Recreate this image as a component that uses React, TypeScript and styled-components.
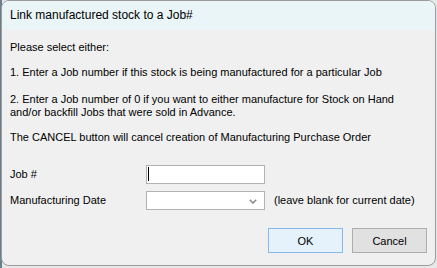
import React from "react";
import styled, { createGlobalStyle } from "styled-components";

const Global = createGlobalStyle`
  html, body { margin: 0; padding: 0; }
  body {
    background: linear-gradient(90deg, #6a7f8c 0px, #6a7f8c 2px, #e8e8e8 2px);
    width: 437px;
    height: 268px;
    overflow: hidden;
    font-family: Tahoma, "Liberation Sans", "DejaVu Sans", sans-serif;
  }
`;

const Window = styled.div`
  margin: 0 0 0 1px;
  width: 435px;
  height: 266px;
  box-sizing: border-box;
  border: 1px solid #9c9c9c;
  border-radius: 8px;
  overflow: hidden;
  background: #f0f0f0;
  display: flex;
  flex-direction: column;
`;

const TitleBar = styled.div`
  height: 29px;
  flex: none;
  background: #eaf5f7;
  display: flex;
  align-items: center;
  padding-left: 8px;
  padding-bottom: 1px;
  box-sizing: border-box;
  font-family: "Segoe UI", "Liberation Sans", sans-serif;
  font-size: 12px;
  color: #000;
`;

const Body = styled.div`
  flex: 1;
  padding: 11px 8px 0 8px;
  font-size: 11px;
  line-height: 13px;
  color: #000;
  display: flex;
  flex-direction: column;
`;

const Para = styled.p<{ $gap: number }>`
  margin: ${(p) => p.$gap}px 0 0 0;
  white-space: nowrap;
`;

const Form = styled.div`
  margin-top: 21px;
  display: grid;
  grid-template-columns: 127px 119px auto;
  column-gap: 9px;
  row-gap: 7px;
  align-items: center;
`;

const Label = styled.label`
  display: block;
  padding-bottom: 1px;
`;

const Field = styled.div`
  height: 19px;
  box-sizing: border-box;
  border: 1px solid #b2b2b2;
  background: #fff;
  position: relative;
  display: flex;
  align-items: center;
  justify-content: flex-end;
`;

const Caret = styled.span`
  position: absolute;
  left: 1px;
  top: 1px;
  width: 1px;
  height: 14px;
  background: #000;
`;

const Chevron = styled.svg`
  margin-right: 7px;
  margin-top: 1px;
`;

const Hint = styled.span`
  white-space: nowrap;
`;

const Buttons = styled.div`
  margin-top: 18px;
  display: flex;
  justify-content: flex-end;
  gap: 9px;
`;

const Button = styled.button<{ $primary?: boolean }>`
  width: 75px;
  height: 25px;
  box-sizing: border-box;
  border: 1px solid ${(p) => (p.$primary ? "#84b9ec" : "#adadad")};
  background: ${(p) => (p.$primary ? "#e5f1fb" : "#e1e1e1")};
  font-family: inherit;
  font-size: 11px;
  color: #000;
  padding: 0;
  margin: 0;
`;

export default function App() {
  return (
    <>
      <Global />
      <Window>
        <TitleBar>Link manufactured stock to a Job#</TitleBar>
        <Body>
          <Para $gap={0}>Please select either:</Para>
          <Para $gap={12}>
            1. Enter a Job number if this stock is being manufactured for a particular Job
          </Para>
          <Para $gap={14}>
            2. Enter a Job number of 0 if you want to either manufacture for Stock on Hand
            <br />
            and/or backfill Jobs that were sold in Advance.
          </Para>
          <Para $gap={12}>
            The CANCEL button will cancel creation of Manufacturing Purchase Order
          </Para>
          <Form>
            <Label>Job #</Label>
            <Field>
              <Caret />
            </Field>
            <span />
            <Label>Manufacturing Date</Label>
            <Field>
              <Chevron width="8" height="5" viewBox="0 0 8 5">
                <path d="M0.8 0.8 L4 4 L7.2 0.8" fill="none" stroke="#8a8a8a" strokeWidth="1.6" />
              </Chevron>
            </Field>
            <Hint>(leave blank for current date)</Hint>
          </Form>
          <Buttons>
            <Button $primary>OK</Button>
            <Button>Cancel</Button>
          </Buttons>
        </Body>
      </Window>
    </>
  );
}
